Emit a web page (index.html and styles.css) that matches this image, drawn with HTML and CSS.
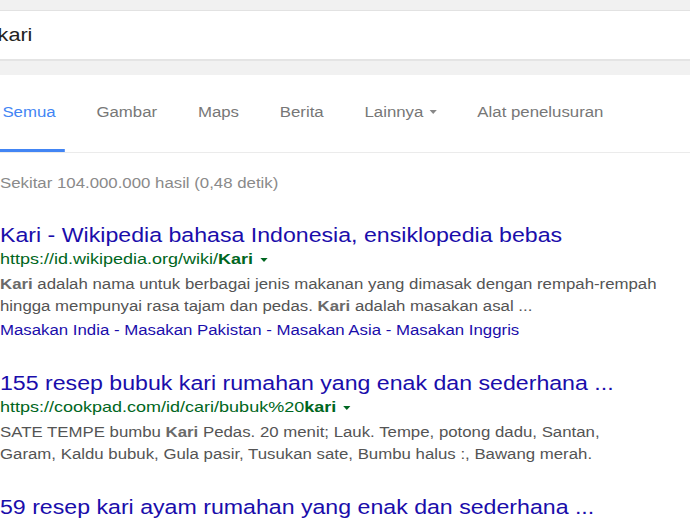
FILE: index.html
```html
<!DOCTYPE html>
<html lang="id">
<head>
<meta charset="utf-8">
<title>kari - Penelusuran Google</title>
<link rel="stylesheet" href="styles.css">
</head>
<body>
<div class="page">
  <div class="topbar"></div>
  <div class="searchbox"><span class="query">kari</span></div>
  <div class="band"></div>
  <nav class="tabs">
    <a class="tab active">Semua</a>
    <a class="tab">Gambar</a>
    <a class="tab">Maps</a>
    <a class="tab">Berita</a>
    <a class="tab">Lainnya <span class="caret"></span></a>
    <a class="tab">Alat penelusuran</a>
  </nav>
  <div class="stats">Sekitar 104.000.000 hasil (0,48 detik)</div>

  <div class="result">
    <a class="title">Kari - Wikipedia bahasa Indonesia, ensiklopedia bebas</a>
    <div class="url">https://id.wikipedia.org/wiki/<b>Kari</b> <span class="ucaret"></span></div>
    <div class="snippet"><b>Kari</b> adalah nama untuk berbagai jenis makanan yang dimasak dengan rempah-rempah hingga mempunyai rasa tajam dan pedas. <b>Kari</b> adalah masakan asal ...</div>
    <div class="sitelinks"><a>Masakan India</a> - <a>Masakan Pakistan</a> - <a>Masakan Asia</a> - <a>Masakan Inggris</a></div>
  </div>

  <div class="result">
    <a class="title">155 resep bubuk kari rumahan yang enak dan sederhana ...</a>
    <div class="url">https://cookpad.com/id/cari/bubuk%20<b>kari</b> <span class="ucaret"></span></div>
    <div class="snippet">SATE TEMPE bumbu <b>Kari</b> Pedas. 20 menit; Lauk. Tempe, potong dadu, Santan, Garam, Kaldu bubuk, Gula pasir, Tusukan sate, Bumbu halus :, Bawang merah.</div>
  </div>

  <div class="result">
    <a class="title">59 resep kari ayam rumahan yang enak dan sederhana ...</a>
  </div>
</div>
</body>
</html>
```
FILE: styles.css
```css
html, body {
  margin: 0;
  padding: 0;
  background: #ffffff;
  overflow: hidden;
}
body {
  width: 690px;
  height: 518px;
  font-family: "Liberation Sans", Arial, sans-serif;
}
.page {
  width: 575px;
  transform: scaleX(1.2);
  transform-origin: 0 0;
}
.topbar {
  height: 10px;
  background: #f1f1f1;
  border-bottom: 1px solid #e2e2e2;
}
.searchbox {
  height: 48px;
  line-height: 48px;
  background: #ffffff;
  font-size: 18px;
  color: #222222;
}
.query {
  margin-left: -2px;
}
.band {
  height: 14px;
  background: #f1f1f1;
  border-top: 2px solid #e4e4e4;
}
.tabs {
  display: flex;
  height: 77px;
  gap: 18px;
  border-bottom: 1px solid #ebebeb;
}
.tab {
  display: flex;
  align-items: center;
  padding: 0 8px;
  font-size: 14px;
  color: #777777;
  border-bottom: 3px solid transparent;
  white-space: nowrap;
}
.tab.active {
  padding-left: 2px;
  color: #4285f4;
  border-bottom-color: #4285f4;
}
.caret {
  display: inline-block;
  margin-left: 5px;
  border-left: 3.5px solid transparent;
  border-right: 3.5px solid transparent;
  border-top: 4px solid #888888;
}
.stats {
  margin-top: 20px;
  line-height: 20px;
  font-size: 14px;
  color: #8a8a8a;
}
.result {
  margin-top: 31px;
}
.title {
  display: block;
  line-height: 24px;
  font-size: 19.3px;
  color: #1a0dab;
  white-space: nowrap;
}
.url {
  margin-top: 1px;
  line-height: 20px;
  font-size: 15px;
  color: #006621;
  white-space: nowrap;
}
.url b {
  font-weight: bold;
}
.ucaret {
  display: inline-block;
  vertical-align: middle;
  margin-left: 2px;
  border-left: 3.5px solid transparent;
  border-right: 3.5px solid transparent;
  border-top: 4.5px solid #006621;
}
.snippet {
  margin-top: 4px;
  width: 548px;
  line-height: 22px;
  font-size: 14px;
  color: #545454;
}
.snippet b {
  color: #6a6a6a;
}
.sitelinks {
  margin-top: 2px;
  line-height: 22px;
  font-size: 14px;
  color: #1a0dab;
  white-space: nowrap;
}
```
